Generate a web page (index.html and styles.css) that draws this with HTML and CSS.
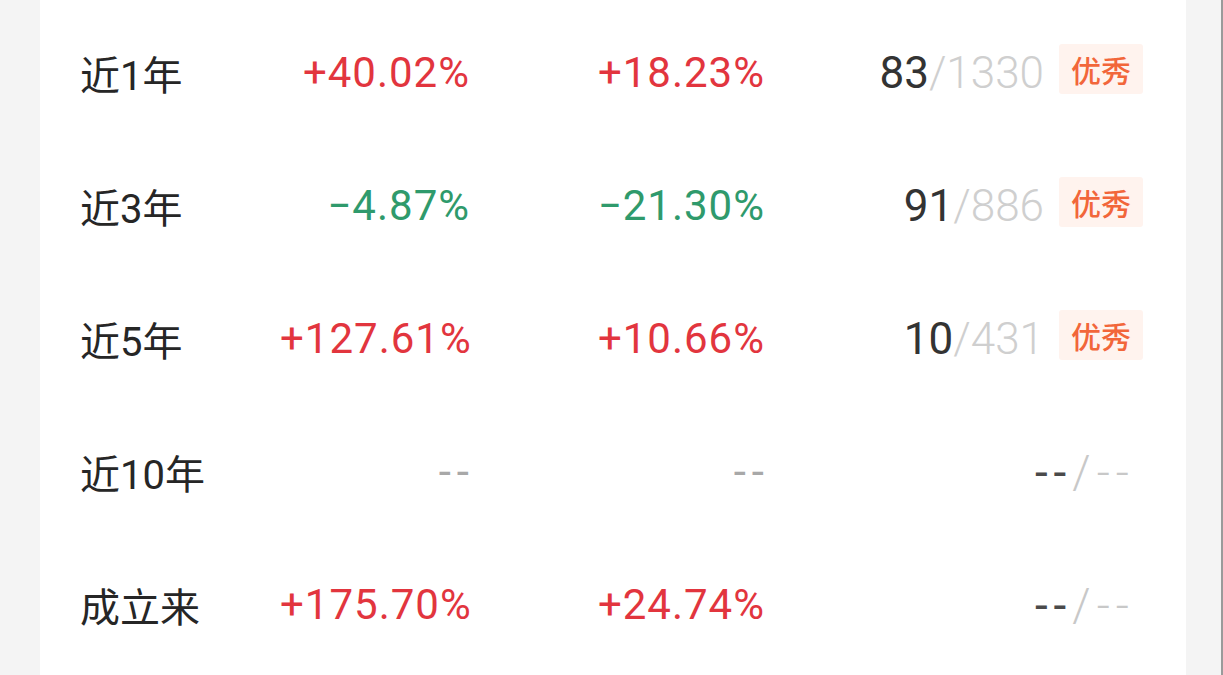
FILE: index.html
```html
<!DOCTYPE html>
<html lang="zh-CN">
<head>
<meta charset="utf-8">
<title>业绩表现</title>
<link rel="stylesheet" href="styles.css">
</head>
<body>
<div class="page">
  <div class="card">
    <div class="row">
      <div class="label">近1年</div>
      <div class="pct up">+40.02%</div>
      <div class="pct up">+18.23%</div>
      <div class="rank"><span class="rk">83</span><span class="tot">/1330</span><span class="badge">优秀</span></div>
    </div>
    <div class="row">
      <div class="label">近3年</div>
      <div class="pct down">−4.87%</div>
      <div class="pct down">−21.30%</div>
      <div class="rank"><span class="rk">91</span><span class="tot">/886</span><span class="badge">优秀</span></div>
    </div>
    <div class="row">
      <div class="label">近5年</div>
      <div class="pct up">+127.61%</div>
      <div class="pct up">+10.66%</div>
      <div class="rank"><span class="rk">10</span><span class="tot">/431</span><span class="badge">优秀</span></div>
    </div>
    <div class="row">
      <div class="label">近10年</div>
      <div class="pct none">--</div>
      <div class="pct none">--</div>
      <div class="rank empty"><span class="rk dash">--</span><span class="tot dash">/--</span></div>
    </div>
    <div class="row">
      <div class="label">成立来</div>
      <div class="pct up">+175.70%</div>
      <div class="pct up">+24.74%</div>
      <div class="rank empty"><span class="rk dash">--</span><span class="tot dash">/--</span></div>
    </div>
  </div>
</div>
</body>
</html>
```
FILE: styles.css
```css
html, body {
  margin: 0;
  padding: 0;
}
body {
  background: #f4f4f4;
  font-family: Roboto, "Noto Sans CJK SC", sans-serif;
  overflow: hidden;
}
.page {
  height: 675px;
  padding-left: 40px;
  padding-right: 37px;
  border-right: 2px solid #9a9a9a;
  box-sizing: border-box;
  width: 1223px;
}
.card {
  background: #fff;
  height: 100%;
  padding: 6px 43px 0 40px;
  box-sizing: border-box;
  width: 1146px;
}
.row {
  display: grid;
  grid-template-columns: 200px 189px 295px 1fr;
  align-items: center;
  height: 133px;
}
.label {
  font-size: 40px;
  color: #262626;
  font-family: Roboto, "Noto Sans CJK SC", sans-serif;
}
.pct {
  text-align: right;
  font-size: 42px;
  letter-spacing: 1px;
  margin-right: -1px;
  font-weight: 400;
}
.up { color: #e2353e; }
.down { color: #2f9a6c; }
.none {
  color: #a8a8a8;
  font-size: 44px;
  font-weight: 400;
  letter-spacing: 6px;
  margin-right: -6px;
}
.rank {
  display: flex;
  align-items: center;
  justify-content: flex-end;
  font-size: 44px;
}
.rk { color: #333; }
.tot { color: #cfcfcf; font-weight: 300; }
.badge {
  margin-left: 15px;
  background: #fff3ee;
  color: #f2663a;
  font-size: 30px;
  font-weight: 500;
  font-family: "Noto Sans CJK SC", sans-serif;
  padding: 6px 12px;
  line-height: 38px;
  border-radius: 3px;
  position: relative;
  top: -4px;
}
.rank.empty {
  padding-right: 14px;
  font-size: 46px;
}
.rk.dash { color: #4a4a4a; letter-spacing: 6px; }
.tot.dash { color: #c8c8c8; letter-spacing: 6px; margin-right: -6px; }
```
